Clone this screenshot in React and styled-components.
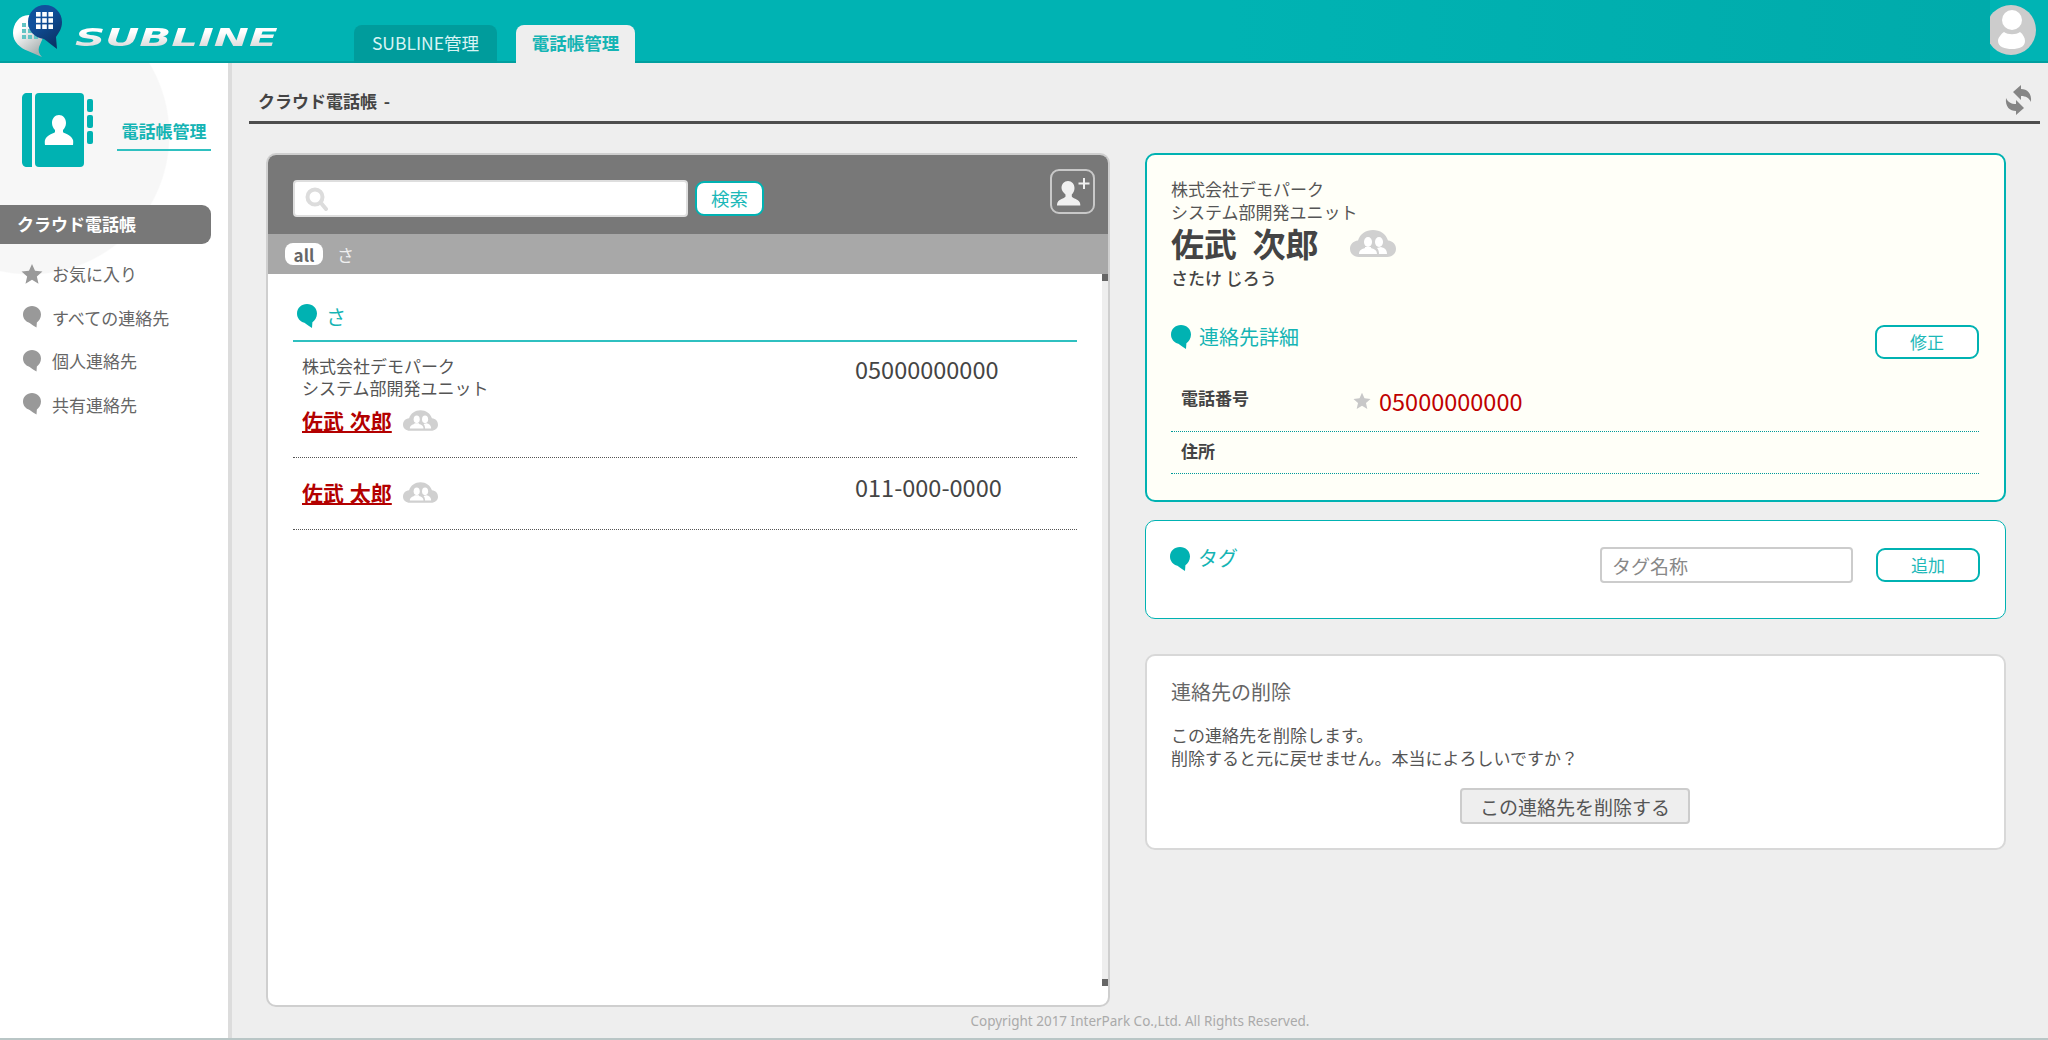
import React from 'react';
import styled, { createGlobalStyle } from 'styled-components';

const TEAL = '#00b2b2';
const FONT = '"Noto Sans CJK JP", "Noto Sans", sans-serif';

const GlobalStyle = createGlobalStyle`
  html, body {
    margin: 0;
    padding: 0;
    background: #eee;
  }
  body {
    font-family: ${FONT};
    color: #555;
  }
  * {
    box-sizing: border-box;
  }
`;

const Page = styled.div`
  width: 2048px;
  height: 1040px;
  display: flex;
  flex-direction: column;
  overflow: hidden;
  border-bottom: 2px solid #b9c6c6;
`;

const Header = styled.header`
  height: 63px;
  flex: none;
  display: flex;
  align-items: flex-end;
  background: linear-gradient(90deg, #00b3b3 0, #00b3b3 60%, #00abab 97%);
  box-shadow: inset 0 -2px 0 #009f9f;
`;

const Brand = styled.div`
  width: 354px;
  height: 63px;
  flex: none;
  display: flex;
  align-items: flex-start;
  padding: 5px 0 0 13px;
`;

const Wordmark = styled.span`
  display: block;
  width: 126px;
  margin: 18px 0 0 12px;
  font-family: "DejaVu Sans", sans-serif;
  font-size: 25px;
  line-height: 30px;
  font-weight: 700;
  font-style: italic;
  white-space: nowrap;
  transform: scaleX(1.68);
  transform-origin: left center;
  background: linear-gradient(180deg, #ffffff 30%, #d4d4d4 90%);
  -webkit-background-clip: text;
  background-clip: text;
  color: transparent;
`;

const Tabs = styled.nav`
  display: flex;
  gap: 19px;
`;

const Tab = styled.div`
  width: ${(p) => (p.$active ? 119 : 143)}px;
  height: 38px;
  padding-bottom: 3px;
  display: flex;
  align-items: center;
  justify-content: center;
  font-size: 17.5px;
  border-radius: 8px 8px 0 0;
  background: ${(p) => (p.$active ? '#eeeeee' : '#009c9c')};
  color: ${(p) => (p.$active ? '#14b4b4' : '#d8f4f4')};
  font-weight: ${(p) => (p.$active ? 700 : 400)};
`;

const UserArea = styled.div`
  margin-left: auto;
  width: 58px;
  height: 63px;
  background: #00b4b4;
  box-shadow: inset 0 -2px 0 #009f9f;
`;

const Columns = styled.div`
  flex: 1;
  display: flex;
  min-height: 0;
`;

const Sidebar = styled.aside`
  width: 232px;
  flex: none;
  background: radial-gradient(circle 140px at 30px 72px, #f7f7f7 99%, rgba(247, 247, 247, 0) 100%), #fff;
  border-right: 4px solid #dcdcdc;
`;

const SideHead = styled.div`
  height: 142px;
  display: flex;
  align-items: flex-start;
  padding: 30px 0 0 22px;
`;

const SideLabel = styled.div`
  width: 94px;
  margin: 26px 0 0 24px;
  padding-bottom: 6px;
  font-size: 17px;
  line-height: 24px;
  font-weight: 700;
  text-align: center;
  color: #14b4b4;
  border-bottom: 2px solid #2fc0c0;
`;

const SideBar = styled.div`
  height: 39px;
  margin-right: 17px;
  padding: 0 0 3px 17px;
  display: flex;
  align-items: center;
  font-size: 17px;
  font-weight: 700;
  color: #fff;
  background: #787878;
  border-radius: 0 9px 9px 0;
`;

const SideList = styled.ul`
  list-style: none;
  margin: 0;
  padding: 8px 0 0 21px;
`;

const SideItem = styled.li`
  height: 43.5px;
  display: flex;
  align-items: center;
  gap: 9px;
  font-size: 17px;
  color: #666;
`;

const SideIcon = styled.span`
  width: 22px;
  display: flex;
  justify-content: center;
`;

const Main = styled.main`
  flex: 1;
  min-width: 0;
  display: flex;
  flex-direction: column;
  background: #eee;
`;

const TitleBar = styled.div`
  height: 61px;
  margin: 0 8px 0 17px;
  padding: 16px 8px 0 9px;
  display: flex;
  align-items: center;
  justify-content: space-between;
  border-bottom: 3px solid #4d4d4d;
`;

const PageTitle = styled.h1`
  margin: 0;
  font-size: 17px;
  font-weight: 700;
  word-spacing: 3px;
  color: #444;
`;

const Content = styled.div`
  margin-top: 29px;
  padding: 0 42px 0 34px;
  display: grid;
  grid-template-columns: 844px 861px;
  column-gap: 35px;
`;

const ListPanel = styled.section`
  height: 854px;
  display: flex;
  flex-direction: column;
  background: #fff;
  border: 2px solid #cfcfcf;
  border-radius: 10px;
  overflow: hidden;
`;

const SearchHead = styled.div`
  height: 79px;
  flex: none;
  display: flex;
  align-items: flex-start;
  padding: 14px 13px 0 25px;
  background: #787878;
`;

const SearchBox = styled.label`
  width: 395px;
  height: 37px;
  margin-top: 11px;
  padding-left: 10px;
  display: flex;
  align-items: center;
  gap: 6px;
  background: #fff;
  border: 2px solid #dedede;
  border-radius: 4px;
`;

const SearchInput = styled.input`
  flex: 1;
  min-width: 0;
  height: 100%;
  border: none;
  outline: none;
  background: none;
  font-family: ${FONT};
  font-size: 17px;
`;

const OutlineButton = styled.button`
  width: ${(p) => p.$width || 104}px;
  height: ${(p) => p.$height || 34}px;
  margin: ${(p) => p.$margin || 0};
  padding: 0 0 2px;
  flex: none;
  font-family: ${FONT};
  font-size: ${(p) => p.$size || 17}px;
  color: #1cb8b8;
  background: #fff;
  border: 2px solid ${TEAL};
  border-radius: 9px;
  cursor: pointer;
`;

const AddButton = styled.button`
  width: 45px;
  height: 45px;
  margin-left: auto;
  padding: 0;
  display: flex;
  align-items: center;
  justify-content: center;
  background: none;
  border: 2px solid #c8c8c8;
  border-radius: 9px;
  cursor: pointer;
`;

const FilterBar = styled.div`
  height: 40px;
  flex: none;
  padding-left: 17px;
  display: flex;
  align-items: center;
  gap: 14px;
  font-size: 17px;
  color: #efefef;
  background: #a8a8a8;
`;

const AllPill = styled.span`
  width: 38px;
  height: 22px;
  display: flex;
  align-items: center;
  justify-content: center;
  font-weight: 700;
  color: #666;
  background: #fff;
  border-radius: 8px;
`;

const ListBody = styled.div`
  flex: 1;
  display: flex;
  min-height: 0;
`;

const ListScroll = styled.div`
  flex: 1;
  padding: 0 25px;
`;

const Track = styled.div`
  width: 6px;
  height: 712px;
  display: flex;
  flex-direction: column;
  justify-content: space-between;
  background: #eeeeee;
`;

const Thumb = styled.div`
  height: 7px;
  background: #666;
`;

const SectionHead = styled.div`
  height: 68px;
  padding: 30px 0 12px 4px;
  display: flex;
  align-items: center;
  gap: 9px;
  font-size: 20px;
  color: #14b4b4;
  border-bottom: 2px solid #2fc0c0;
`;

const ContactRow = styled.div`
  height: ${(p) => p.$height}px;
  padding: 13px 0 0 9px;
  display: grid;
  grid-template-columns: 553px 1fr;
  border-bottom: 1px dotted #555;
`;

const Company = styled.div`
  font-size: 17px;
  line-height: ${(p) => p.$lh || 22}px;
  color: #555;
`;

const NameLine = styled.div`
  height: 28px;
  margin-top: 7px;
  display: flex;
  align-items: center;
  gap: 11px;
`;

const NameLink = styled.a`
  font-size: 21px;
  line-height: 28px;
  font-weight: 700;
  word-spacing: 1px;
  color: #b30000;
  text-decoration: underline;
  cursor: pointer;
`;

const Phone = styled.div`
  padding-top: ${(p) => p.$top || 0}px;
  font-size: 23.5px;
  line-height: 28px;
  color: #444;
`;

const Copyright = styled.footer`
  height: 28px;
  display: flex;
  align-items: center;
  justify-content: center;
  font-family: "Noto Sans", sans-serif;
  font-size: 13.5px;
  color: #aaa;
`;

const RightColumn = styled.div`
  display: flex;
  flex-direction: column;
`;

const Card = styled.section`
  height: ${(p) => p.$height}px;
  margin-top: ${(p) => p.$top || 0}px;
  padding: 22px 25px 0 24px;
  background: ${(p) => (p.$cream ? '#fffff8' : '#fff')};
  border: ${(p) => p.$border || 2}px solid ${(p) => (p.$plain ? '#d8d8d8' : TEAL)};
  border-radius: 10px;
`;

const BigName = styled.div`
  margin-top: -1px;
  display: flex;
  align-items: center;
  gap: 31px;
  font-size: 33px;
  line-height: 42px;
  font-weight: 700;
  word-spacing: 8px;
  color: #444;
`;

const Reading = styled.div`
  margin-top: 1px;
  font-size: 17px;
  line-height: 26px;
  font-weight: 500;
  color: #444;
`;

const DetailHead = styled.div`
  margin-top: 34px;
  display: flex;
  align-items: flex-start;
  justify-content: space-between;
`;

const Heading = styled.h2`
  margin: 0;
  display: flex;
  align-items: flex-start;
  gap: 8px;
  font-size: 20px;
  line-height: ${(p) => (p.$tight ? 22 : 24)}px;
  font-weight: 400;
  color: #14b4b4;
`;

const InfoRow = styled.div`
  height: ${(p) => p.$height}px;
  padding: ${(p) => p.$top}px 0 0 10px;
  display: grid;
  grid-template-columns: 172px 1fr;
  align-items: start;
  border-bottom: 1px dotted #009a9a;
`;

const InfoLabel = styled.div`
  font-size: 17px;
  line-height: ${(p) => p.$lh}px;
  font-weight: 700;
  color: #444;
`;

const InfoValue = styled.div`
  padding-top: 6px;
  display: flex;
  align-items: center;
  gap: 8px;
  font-size: 23.5px;
  line-height: 30px;
  color: #bf0000;
`;

const TagCard = styled(Card)`
  padding-top: 26px;
  display: flex;
  align-items: flex-start;
`;

const TagInput = styled.input`
  width: 253px;
  height: 36px;
  margin-left: auto;
  padding: 0 10px;
  font-family: ${FONT};
  font-size: 19px;
  background: #fff;
  border: 2px solid #ccc;
  border-radius: 4px;
  outline: none;
  &::placeholder {
    color: #888;
  }
`;

const DeleteTitle = styled.h2`
  margin: 0;
  font-size: 20px;
  line-height: 28px;
  font-weight: 400;
  color: #666;
`;

const DeleteText = styled.p`
  margin: 17px 0 0;
  font-size: 17px;
  line-height: 23px;
  color: #555;
`;

const DeleteRow = styled.div`
  margin-top: 19px;
  display: flex;
  justify-content: center;
`;

const DeleteButton = styled.button`
  width: 230px;
  height: 36px;
  padding: 0;
  font-family: ${FONT};
  font-size: 19px;
  color: #555;
  background: #eee;
  border: 2px solid #ccc;
  border-radius: 4px;
  cursor: pointer;
`;

function Logo() {
  return (
    <svg width="50" height="52" viewBox="0 0 50 52">
      <defs>
        <linearGradient id="bubbleFill" x1="0" y1="0" x2="0.6" y2="1">
          <stop offset="0.35" stopColor="#ffffff" />
          <stop offset="1" stopColor="#a9b1b1" />
        </linearGradient>
        <linearGradient id="dropFill" x1="0" y1="0" x2="0.6" y2="1">
          <stop offset="0.4" stopColor="#11509c" />
          <stop offset="1" stopColor="#0a3468" />
        </linearGradient>
      </defs>
      <path d="M16 10C6 10 0 19 0 28c0 9 7 15 15 18l14 6c-3-3-4-6-3-10l6-14L24 12c-2-1-5-2-8-2z" fill="url(#bubbleFill)" />
      {[18, 24, 30].map((y) =>
        [9, 15, 21].map((x) => <rect key={`${x}-${y}`} x={x} y={y} width="4" height="4" fill="#63c4c4" />)
      )}
      <path d="M32 0c9.500 0 17 7.500 17 17 0 7-3.500 11-6 15l1 12c-5-4-9-7-13-10-9-1-16-8-16-17C15 7.500 22.500 0 32 0z" fill="url(#dropFill)" />
      {[7, 13.200, 19.400].map((y) =>
        [23, 29.200, 35.400].map((x) => <rect key={`${x}-${y}`} x={x} y={y} width="4.600" height="4.600" fill="#fff" />)
      )}
    </svg>
  );
}

function Avatar() {
  return (
    <svg width="58" height="61" viewBox="0 0 58 61">
      <circle cx="21" cy="30" r="25" fill="#cccccc" />
      <circle cx="22" cy="20" r="10" fill="#fff" />
      <path d="M14 32c4 3 12 3 16 0 3 2 5 6 5 9 0 6-6 8-13 8s-14-2-14-8c0-3 3-7 6-9z" fill="#fff" />
    </svg>
  );
}

function BookIcon() {
  return (
    <svg width="71" height="74" viewBox="0 0 71 74">
      <path d="M5 0h5v74H5c-3 0-5-2-5-5V5c0-3 2-5 5-5z" fill={TEAL} />
      <rect x="13" y="0" width="49" height="74" rx="4" fill={TEAL} />
      <rect x="65" y="6" width="6" height="13" rx="2" fill={TEAL} />
      <rect x="65" y="22" width="6" height="13" rx="2" fill={TEAL} />
      <rect x="65" y="38" width="6" height="13" rx="2" fill={TEAL} />
      <path d="M37 22c4 0 7 3.500 7 8 0 3-1.500 5.500-3 7v2c0 1.500 8 2 10 8 .3 1 .3 3 0 5H23c-.3-2-.3-4 0-5 2-6 10-6.500 10-8v-2c-1.500-1.500-3-4-3-7 0-4.500 3-8 7-8z" fill="#fff" />
    </svg>
  );
}

function Star({ size = 24, color = '#999' }) {
  return (
    <svg width={size} height={size} viewBox="0 0 24 24">
      <path d="M12 1l3.300 7.400 8.100.8-6.100 5.400 1.800 8L12 18.400 4.900 22.600l1.800-8L.6 9.200l8.100-.8z" fill={color} />
    </svg>
  );
}

function Drop({ width = 20, color = TEAL }) {
  return (
    <svg width={width} height={width * 1.2} viewBox="0 0 20 24" style={{ flex: 'none' }}>
      <path d="M10 0c5.600 0 10 4 10 9.500 0 4-2.200 7-4.600 8.800L15 24c-2.600-1.600-5-3.400-7.600-5.200C3 17.600 0 14 0 9.500 0 4 4.400 0 10 0z" fill={color} />
    </svg>
  );
}

function CloudPeople({ width = 35, height = 21 }) {
  return (
    <svg width={width} height={height} viewBox="0 0 46 27" style={{ flex: 'none' }}>
      <path d="M9 27C4 27 0 23.500 0 19c0-4.500 3-8 8-8.500C10 4 16 0 23 0s13 4 15 10.500c5 .5 8 4 8 8.500 0 4.500-4 8-9 8z" fill="#d0d0d0" />
      <ellipse cx="18" cy="12" rx="4" ry="5" fill="#fff" />
      <path d="M15 17h6v1c3 1 6 2 6 6H9c0-4 3-5 6-6z" fill="#fff" />
      <ellipse cx="29" cy="12" rx="4" ry="5" fill="#fff" />
      <path d="M27 18l4-1c3 1 6 2 6 7h-8c0-3-1-5-2-6z" fill="#fff" />
    </svg>
  );
}

function SearchIcon() {
  return (
    <svg width="24" height="24" viewBox="0 0 24 24" fill="none" stroke="#dcdcdc" strokeWidth="4" strokeLinecap="round" style={{ flex: 'none' }}>
      <circle cx="10" cy="10" r="7.500" />
      <path d="M16 16l5 6" />
    </svg>
  );
}

function AddContactIcon() {
  return (
    <svg width="41" height="41" viewBox="0 0 41 41">
      <path d="M16 10c3.800 0 6.500 3 6.500 7 0 3-1.200 5-2.700 6.500v2c0 1.500 6.500 2.500 8 6 .5 1 .5 2 .5 3H5c0-1 0-2 .5-3 1.500-3.500 8-4.500 8-6v-2C12 22 9.500 20 9.500 17c0-4 2.700-7 6.500-7z" fill="#f0f0f0" />
      <path d="M32 7v11M26.500 12.500h11" stroke="#f0f0f0" strokeWidth="2" />
    </svg>
  );
}

function RefreshIcon() {
  return (
    <svg width="27" height="30" viewBox="0 0 27 30">
      <path d="M8 7l8-7v4c6 0 11 4 10 13-2-4-5-6-10-6v4z" fill="#858585" />
      <path d="M19 23l-8 7v-4C5 26 0 22 1 13c2 4 5 6 10 6v-4z" fill="#858585" />
    </svg>
  );
}

export default function App() {
  return (
    <Page>
      <GlobalStyle />
      <Header>
        <Brand>
          <Logo />
          <Wordmark>SUBLINE</Wordmark>
        </Brand>
        <Tabs>
          <Tab>SUBLINE管理</Tab>
          <Tab $active>電話帳管理</Tab>
        </Tabs>
        <UserArea>
          <Avatar />
        </UserArea>
      </Header>
      <Columns>
        <Sidebar>
          <SideHead>
            <BookIcon />
            <SideLabel>電話帳管理</SideLabel>
          </SideHead>
          <SideBar>クラウド電話帳</SideBar>
          <SideList>
            <SideItem>
              <SideIcon><Star /></SideIcon>
              お気に入り
            </SideItem>
            <SideItem>
              <SideIcon><Drop width={18} color="#999" /></SideIcon>
              すべての連絡先
            </SideItem>
            <SideItem>
              <SideIcon><Drop width={18} color="#999" /></SideIcon>
              個人連絡先
            </SideItem>
            <SideItem>
              <SideIcon><Drop width={18} color="#999" /></SideIcon>
              共有連絡先
            </SideItem>
          </SideList>
        </Sidebar>
        <Main>
          <TitleBar>
            <PageTitle>クラウド電話帳 -</PageTitle>
            <RefreshIcon />
          </TitleBar>
          <Content>
            <ListPanel>
              <SearchHead>
                <SearchBox>
                  <SearchIcon />
                  <SearchInput type="text" />
                </SearchBox>
                <OutlineButton $width={69} $height={35} $size={18.5} $margin="12px 0 0 7px">検索</OutlineButton>
                <AddButton><AddContactIcon /></AddButton>
              </SearchHead>
              <FilterBar>
                <AllPill>all</AllPill>
                さ
              </FilterBar>
              <ListBody>
                <ListScroll>
                  <SectionHead>
                    <Drop width={20} />
                    さ
                  </SectionHead>
                  <ContactRow $height={116}>
                    <div>
                      <Company>株式会社デモパーク<br />システム部開発ユニット</Company>
                      <NameLine>
                        <NameLink>佐武 次郎</NameLink>
                        <CloudPeople />
                      </NameLine>
                    </div>
                    <Phone>05000000000</Phone>
                  </ContactRow>
                  <ContactRow $height={72}>
                    <NameLine>
                      <NameLink>佐武 太郎</NameLink>
                      <CloudPeople />
                    </NameLine>
                    <Phone $top={2}>011-000-0000</Phone>
                  </ContactRow>
                </ListScroll>
                <Track>
                  <Thumb />
                  <Thumb />
                </Track>
              </ListBody>
            </ListPanel>
            <RightColumn>
              <Card $height={349} $cream>
                <Company $lh={23}>株式会社デモパーク<br />システム部開発ユニット</Company>
                <BigName>
                  佐武 次郎
                  <CloudPeople width={46} height={27} />
                </BigName>
                <Reading>さたけ じろう</Reading>
                <DetailHead>
                  <Heading><Drop width={20} />連絡先詳細</Heading>
                  <OutlineButton>修正</OutlineButton>
                </DetailHead>
                <InfoRow $height={73} $top={21}>
                  <InfoLabel $lh={36}>電話番号</InfoLabel>
                  <InfoValue><Star size={18} color="#c8c8c8" />05000000000</InfoValue>
                </InfoRow>
                <InfoRow $height={42} $top={7}>
                  <InfoLabel $lh={24}>住所</InfoLabel>
                </InfoRow>
              </Card>
              <TagCard $height={99} $top={18} $border={1}>
                <Heading $tight><Drop width={20} />タグ</Heading>
                <TagInput placeholder="タグ名称" />
                <OutlineButton $margin="1px 0 0 23px">追加</OutlineButton>
              </TagCard>
              <Card $height={196} $top={35} $plain>
                <DeleteTitle>連絡先の削除</DeleteTitle>
                <DeleteText>この連絡先を削除します。<br />削除すると元に戻せません。本当によろしいですか？</DeleteText>
                <DeleteRow>
                  <DeleteButton>この連絡先を削除する</DeleteButton>
                </DeleteRow>
              </Card>
            </RightColumn>
          </Content>
          <Copyright>Copyright 2017 InterPark Co.,Ltd. All Rights Reserved.</Copyright>
        </Main>
      </Columns>
    </Page>
  );
}
